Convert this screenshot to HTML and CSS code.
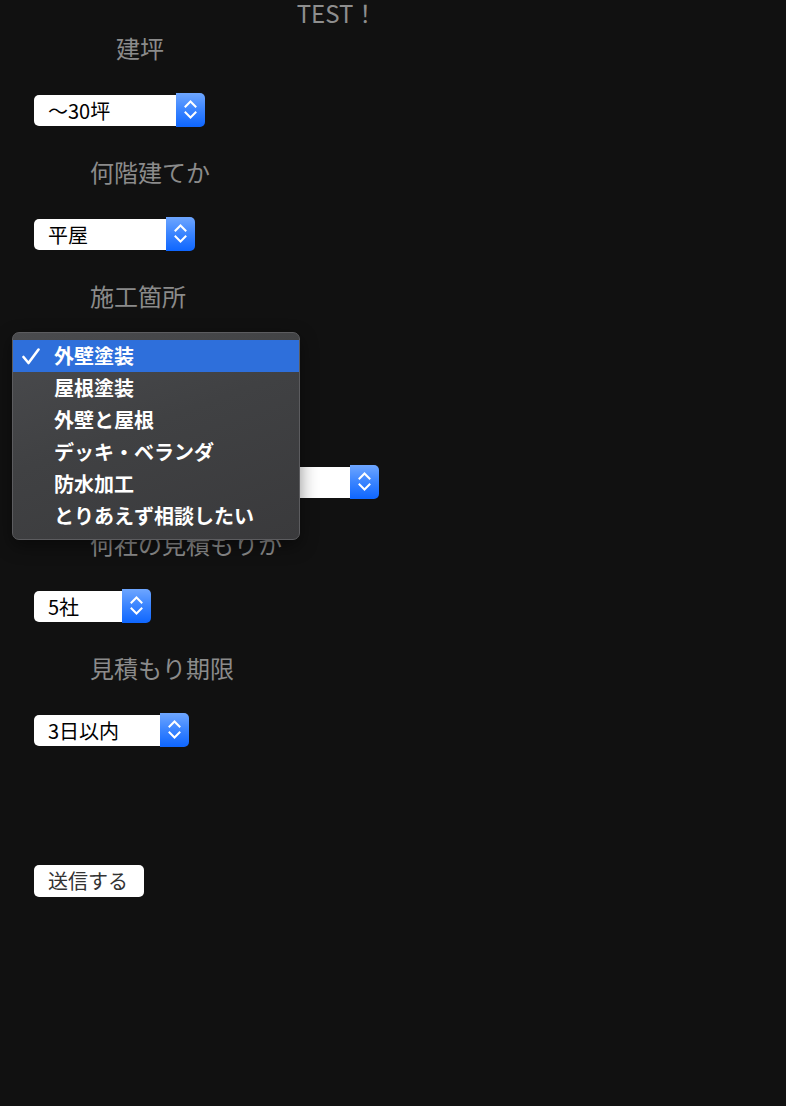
FILE: index.html
```html
<!DOCTYPE html>
<html lang="ja">
<head>
<meta charset="utf-8">
<title>TEST！</title>
<link rel="stylesheet" href="styles.css">
</head>
<body>
<h1 class="title">TEST！</h1>
<form class="form">
  <div class="label label--indent">建坪</div>
  <div class="select select--w171"><span class="select-value">〜30坪</span><span class="select-btn"><svg width="29" height="34" viewBox="0 0 29 34"><polyline points="9.5,13.5 14.5,8.5 19.5,13.5"/><polyline points="9.5,19.5 14.5,24.5 19.5,19.5"/></svg></span></div>

  <div class="label">何階建てか</div>
  <div class="select select--w161"><span class="select-value">平屋</span><span class="select-btn"><svg width="29" height="34" viewBox="0 0 29 34"><polyline points="9.5,13.5 14.5,8.5 19.5,13.5"/><polyline points="9.5,19.5 14.5,24.5 19.5,19.5"/></svg></span></div>

  <div class="label">施工箇所</div>
  <div class="select select--w250"><span class="select-value"></span><span class="select-btn"><svg width="29" height="34" viewBox="0 0 29 34"><polyline points="9.5,13.5 14.5,8.5 19.5,13.5"/><polyline points="9.5,19.5 14.5,24.5 19.5,19.5"/></svg></span></div>

  <div class="label"></div>
  <div class="select select--w345"><span class="select-value"></span><span class="select-btn"><svg width="29" height="34" viewBox="0 0 29 34"><polyline points="9.5,13.5 14.5,8.5 19.5,13.5"/><polyline points="9.5,19.5 14.5,24.5 19.5,19.5"/></svg></span></div>

  <div class="label">何社の見積もりか</div>
  <div class="select select--w117"><span class="select-value">5社</span><span class="select-btn"><svg width="29" height="34" viewBox="0 0 29 34"><polyline points="9.5,13.5 14.5,8.5 19.5,13.5"/><polyline points="9.5,19.5 14.5,24.5 19.5,19.5"/></svg></span></div>

  <div class="label">見積もり期限</div>
  <div class="select select--w155"><span class="select-value">3日以内</span><span class="select-btn"><svg width="29" height="34" viewBox="0 0 29 34"><polyline points="9.5,13.5 14.5,8.5 19.5,13.5"/><polyline points="9.5,19.5 14.5,24.5 19.5,19.5"/></svg></span></div>

  <button type="button" class="submit">送信する</button>
</form>

<ul class="menu">
  <li class="menu-item menu-item--active"><svg class="check" width="18" height="17" viewBox="0 0 18 17"><polyline points="1.5,9 6.5,15 16.5,1.5"/></svg>外壁塗装</li>
  <li class="menu-item">屋根塗装</li>
  <li class="menu-item">外壁と屋根</li>
  <li class="menu-item">デッキ・ベランダ</li>
  <li class="menu-item">防水加工</li>
  <li class="menu-item">とりあえず相談したい</li>
</ul>
</body>
</html>
```
FILE: styles.css
```css
html, body {
  margin: 0;
  padding: 0;
  background: #111111;
}
body {
  font-family: "Noto Sans CJK JP", "Noto Sans", sans-serif;
  width: 786px;
  height: 1106px;
  position: relative;
  overflow: hidden;
}
.title {
  margin: 0 0 9px 0;
  padding-right: 112px;
  height: 26px;
  line-height: 26px;
  font-size: 24px;
  font-weight: 400;
  color: #8e8e8e;
  text-align: center;
}
.form {
  display: flex;
  flex-direction: column;
  align-items: flex-start;
  gap: 33px;
  padding-left: 34px;
}
.label {
  height: 26px;
  line-height: 26px;
  font-size: 24px;
  color: #8b8b8b;
  padding-left: 56px;
  white-space: nowrap;
}
.label--indent {
  padding-left: 82px;
}
.select {
  display: flex;
  align-items: center;
  height: 32px;
  box-sizing: border-box;
}
.select-value {
  flex: 1;
  height: 31px;
  line-height: 31px;
  background: #ffffff;
  border-radius: 5px 0 0 5px;
  padding-left: 14px;
  font-size: 20px;
  color: #000000;
  white-space: nowrap;
}
.select-btn {
  width: 29px;
  height: 34px;
  border-radius: 0 5px 5px 0;
  background: linear-gradient(#6ea6ff, #3a84ff 50%, #0e66ff);
  display: flex;
}
.select-btn svg {
  fill: none;
  stroke: #ffffff;
  stroke-width: 2;
  stroke-linecap: square;
}
.select--w171 { width: 171px; }
.select--w161 { width: 161px; }
.select--w250 { width: 250px; }
.select--w345 { width: 345px; }
.select--w117 { width: 117px; }
.select--w155 { width: 155px; }
.submit {
  margin-top: 86px;
  width: 110px;
  height: 32px;
  border: none;
  border-radius: 5px;
  background: #ffffff;
  padding: 0 0 0 14px;
  text-align: left;
  font-family: "Noto Sans CJK JP", "Noto Sans", sans-serif;
  font-size: 20px;
  line-height: 32px;
  color: #333333;
}
.menu {
  position: absolute;
  left: 12px;
  top: 332px;
  width: 288px;
  height: 208px;
  box-sizing: border-box;
  margin: 0;
  padding: 7px 0 0 0;
  list-style: none;
  border: 1px solid #5c5c5f;
  border-radius: 7px;
  background: linear-gradient(160deg, #4a4b4e 0%, #404143 45%, #3a3a3c 100%);
  box-shadow: 0 6px 18px rgba(0, 0, 0, 0.45);
}
.menu-item {
  position: relative;
  height: 32px;
  line-height: 32px;
  padding-left: 41px;
  font-size: 20px;
  font-weight: 700;
  color: #ffffff;
  white-space: nowrap;
}
.menu-item--active {
  background: #2e6fdb;
}
.check {
  position: absolute;
  left: 9px;
  top: 8px;
  fill: none;
  stroke: #ffffff;
  stroke-width: 2.6;
  stroke-linecap: round;
  stroke-linejoin: round;
}
```
